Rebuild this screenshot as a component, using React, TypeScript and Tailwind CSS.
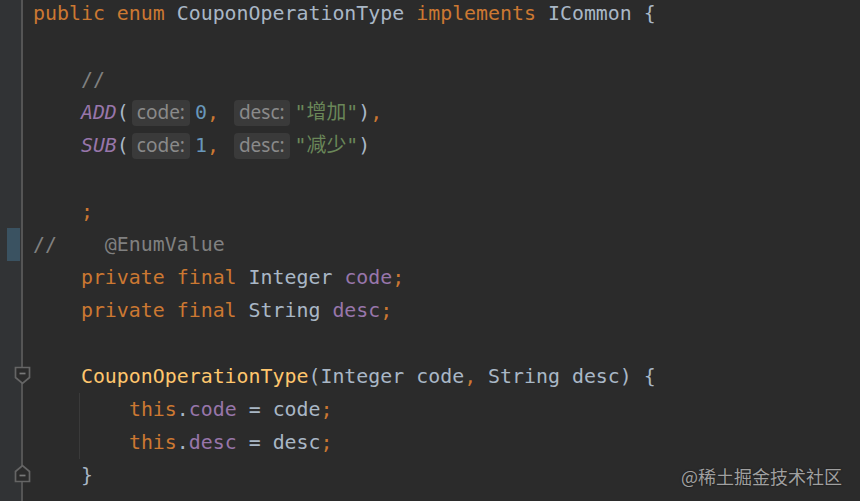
import React from "react";

type Tok = { t: string; c?: string };

const KW = "text-[#cc7832]";
const ID = "text-[#a9b7c6]";
const FLD = "text-[#9876aa]";
const CMT = "text-[#808080]";

const Hint = ({ label }: { label: string }) => (
    <span className="inline-flex items-center h-[26px] px-[5px] ml-[3px] mr-[5px] rounded-[4px] bg-[#3a3a3a] text-[#8a8a8a] text-[19px] font-['Noto_Sans',sans-serif]">
        {label}
    </span>
);

const Code = ({ toks }: { toks: Tok[] }) => (
    <>
        {toks.map((k, i) => (
            <span key={i} className={k.c ?? ID}>
                {k.t}
            </span>
        ))}
    </>
);

const FoldOpen = () => (
    <svg width="17" height="19" viewBox="0 0 17 19" className="absolute left-[14px] top-[6px]">
        <path d="M1.5 1.5 H15.5 V11.5 L8.5 17.5 L1.5 11.5 Z" fill="#2b2b2b" stroke="#656565" strokeWidth="1.7" />
        <path d="M5.5 7.5 H11.5" stroke="#787878" strokeWidth="1.7" />
    </svg>
);

const FoldClose = () => (
    <svg width="17" height="19" viewBox="0 0 17 19" className="absolute left-[14px] top-[5px]">
        <path d="M1.5 17.5 H15.5 V7.5 L8.5 1.5 L1.5 7.5 Z" fill="#2b2b2b" stroke="#656565" strokeWidth="1.7" />
        <path d="M5.5 11.5 H11.5" stroke="#787878" strokeWidth="1.7" />
    </svg>
);

const Row = ({
    children,
    gutter,
}: {
    children?: React.ReactNode;
    gutter?: "change" | "open" | "close";
}) => (
    <div className="relative flex h-[33px] shrink-0">
        <div className="w-[21px] shrink-0 bg-[#313335] flex">
            {gutter === "change" && <div className="ml-[7px] w-[13px] h-[33px] bg-[#3a5261]" />}
        </div>
        <div className="w-[2px] shrink-0 bg-[#555555]" />
        {gutter === "open" && <FoldOpen />}
        {gutter === "close" && <FoldClose />}
        <div className="pl-[10px] flex items-center whitespace-pre">{children}</div>
    </div>
);

const Guide = () => (
    <>
        <span className="inline-block w-[46px]" />
        <span className="inline-block w-[1px] h-[33px] bg-[#3a3a3a]" />
        <span className="inline-block w-[1px]" />
        <span>{"    "}</span>
    </>
);

export default function App() {
    return (
        <div className="w-[860px] h-[501px] bg-[#2b2b2b] overflow-hidden relative font-['DejaVu_Sans_Mono','Noto_Sans_CJK_SC',monospace] text-[19.9px]">
            <div className="flex flex-col -mt-[3px]">
                <Row>
                    <Code
                        toks={[
                            { t: "public enum ", c: KW },
                            { t: "CouponOperationType " },
                            { t: "implements ", c: KW },
                            { t: "ICommon {" },
                        ]}
                    />
                </Row>
                <Row />
                <Row>
                    <span className={CMT}>{"    //"}</span>
                </Row>
                <Row>
                    <span>{"    "}</span>
                    <span className="text-[#9876aa] italic">ADD</span>
                    <span className={ID}>(</span>
                    <Hint label="code:" />
                    <span className="text-[#6897bb]">0</span>
                    <span className={KW}>, </span>
                    <Hint label="desc:" />
                    <span className="text-[#6a8759]">"增加"</span>
                    <span className={ID}>)</span>
                    <span className={KW}>,</span>
                </Row>
                <Row>
                    <span>{"    "}</span>
                    <span className="text-[#9876aa] italic">SUB</span>
                    <span className={ID}>(</span>
                    <Hint label="code:" />
                    <span className="text-[#6897bb]">1</span>
                    <span className={KW}>, </span>
                    <Hint label="desc:" />
                    <span className="text-[#6a8759]">"减少"</span>
                    <span className={ID}>)</span>
                </Row>
                <Row />
                <Row>
                    <span className={KW}>{"    ;"}</span>
                </Row>
                <Row gutter="change">
                    <span className={CMT}>{"//    @EnumValue"}</span>
                </Row>
                <Row>
                    <Code
                        toks={[
                            { t: "    private final ", c: KW },
                            { t: "Integer " },
                            { t: "code", c: FLD },
                            { t: ";", c: KW },
                        ]}
                    />
                </Row>
                <Row>
                    <Code
                        toks={[
                            { t: "    private final ", c: KW },
                            { t: "String " },
                            { t: "desc", c: FLD },
                            { t: ";", c: KW },
                        ]}
                    />
                </Row>
                <Row />
                <Row gutter="open">
                    <Code
                        toks={[
                            { t: "    " },
                            { t: "CouponOperationType", c: "text-[#ffc66d]" },
                            { t: "(Integer code" },
                            { t: ", ", c: KW },
                            { t: "String desc) {" },
                        ]}
                    />
                </Row>
                <Row>
                    <Guide />
                    <Code
                        toks={[
                            { t: "this", c: KW },
                            { t: "." },
                            { t: "code", c: FLD },
                            { t: " = code" },
                            { t: ";", c: KW },
                        ]}
                    />
                </Row>
                <Row>
                    <Guide />
                    <Code
                        toks={[
                            { t: "this", c: KW },
                            { t: "." },
                            { t: "desc", c: FLD },
                            { t: " = desc" },
                            { t: ";", c: KW },
                        ]}
                    />
                </Row>
                <Row gutter="close">
                    <span className={ID}>{"    }"}</span>
                </Row>
                <Row />
            </div>
            <div className="absolute right-[18px] bottom-[14px] text-[18px] leading-[22px] text-[#a0a0a0] font-['Noto_Sans_CJK_SC',sans-serif] [text-shadow:0_0_2px_rgba(0,0,0,0.6)]">
                @稀土掘金技术社区
            </div>
        </div>
    );
}
